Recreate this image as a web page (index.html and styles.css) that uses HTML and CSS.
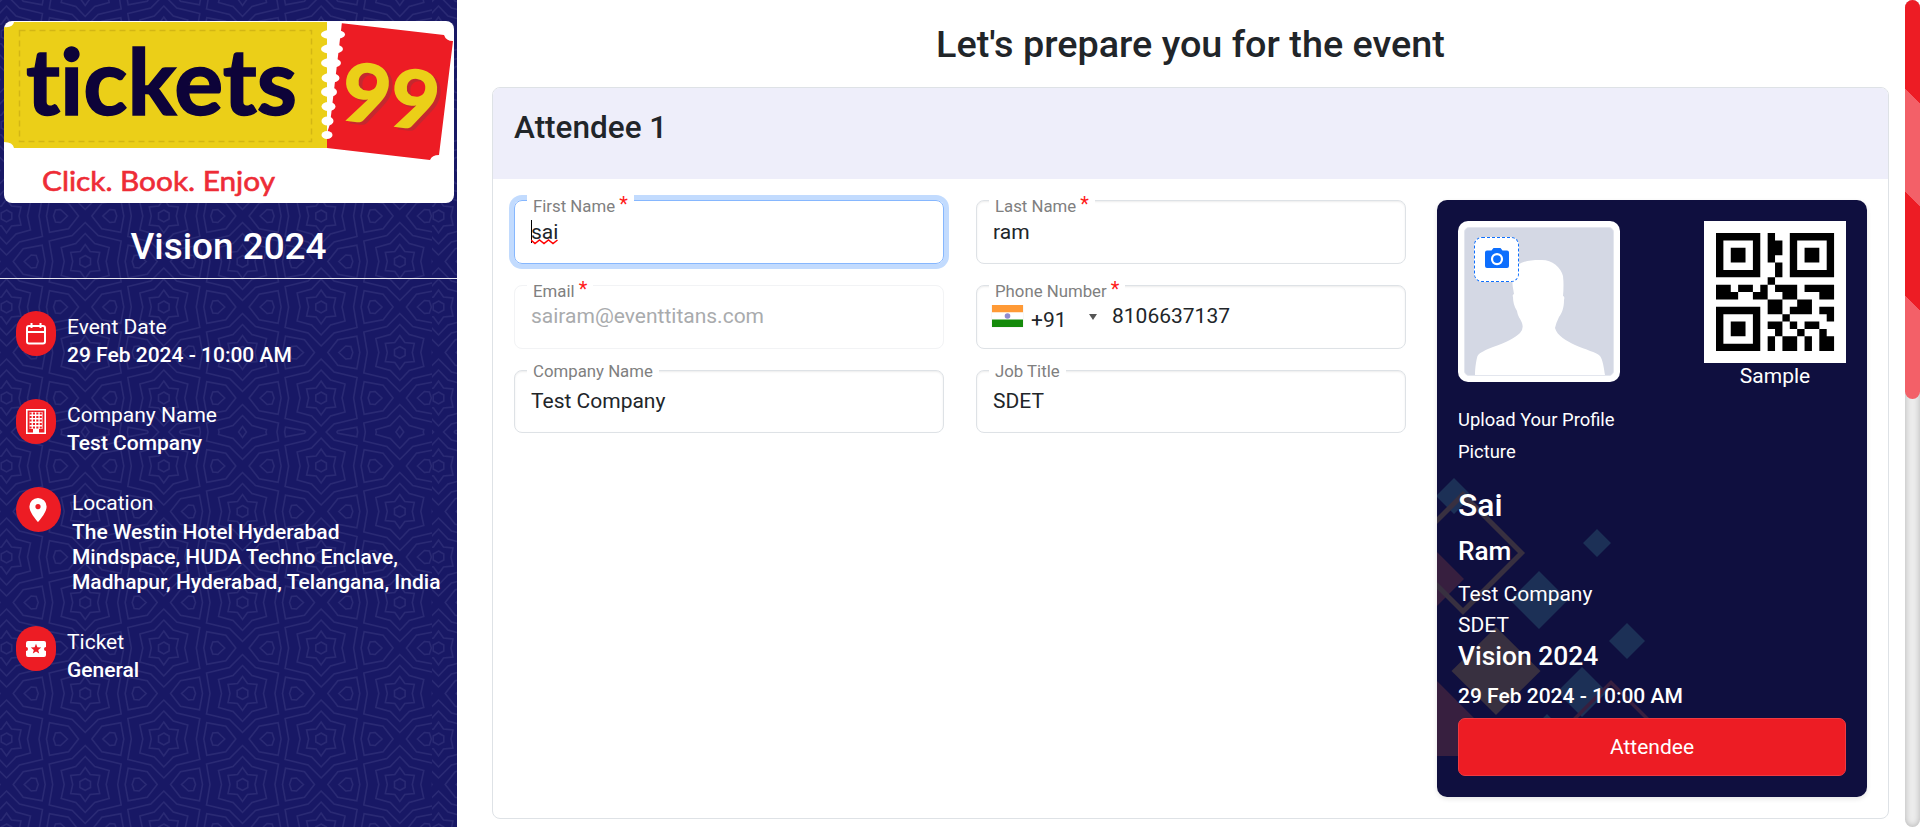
FILE: index.html
```html
<!DOCTYPE html>
<html lang="en">
<head>
<meta charset="utf-8">
<title>Vision 2024</title>
<link rel="stylesheet" href="styles.css">
</head>
<body>
<div class="page">
  <aside class="sidebar">
    <svg class="sidebar-pattern" width="457" height="827" aria-hidden="true">
      <defs>
        <g id="star" fill="none" stroke="#2a2a74" stroke-width="1.5">
          <path d="M0-6 5.3-3V3L0 6-5.3 3V-3Z"/>
          <path d="M0-17 5-10 14.5-9 12.5 0 14.5 9 5 10 0 17-5 10-14.5 9-12.5 0-14.5-9-5-10Z"/>
          <path d="M0-28 9.5-18 24-14 21 0 24 14 9.5 18 0 28-9.5 18-24 14-21 0-24-14-9.5-18Z"/>
          <path d="M0-39 13-26 36-20.5 32.5 0 36 20.5 13 26 0 39-13 26-36 20.5-32.5 0-36-20.5-13-26Z"/>
          <path d="M72 0 62-12.7 43-16.3 40 0 43 16.3 62 12.7ZM61 0 54-6.5 49-6 47 0 49 6 54 6.5Z"/>
          <path d="M-72 0-62-12.7-43-16.3-40 0-43 16.3-62 12.7ZM-61 0-54-6.5-49-6-47 0-49 6-54 6.5Z"/>
        </g>
        <g id="column">
          <use href="#star" y="-57"/><use href="#star" y="34"/><use href="#star" y="125"/><use href="#star" y="216"/><use href="#star" y="307"/><use href="#star" y="398"/><use href="#star" y="489"/>
        </g>
        <pattern id="tile" width="432" height="432" patternUnits="userSpaceOnUse">
          <use href="#column" x="6.5"/><use href="#column" x="163.8"/><use href="#column" x="321.1"/><use href="#column" x="478.4"/>
          <use href="#column" x="-72" y="45.5"/><use href="#column" x="85.2" y="45.5"/><use href="#column" x="242.5" y="45.5"/><use href="#column" x="399.8" y="45.5"/>
        </pattern>
      </defs>
      <rect width="457" height="827" fill="url(#tile)"/>
    </svg>
    <div class="sidebar-body">
      <svg class="logo" width="450" height="182" viewBox="0 0 450 182" role="img" aria-label="tickets 99">
        <path fill="#ebcf18" d="M10 1H323V127H10Q9 121 0 121V6Q9 7 10 1Z"/>
        <rect x="15.500" y="9.500" width="292" height="111" fill="none" stroke="#d3b615" stroke-width="1.500" stroke-dasharray="6 4"/>
        <path fill="#ed1c24" d="M336 2 440 14Q442 20 449 20L435 134Q428 134 426 139L323 127V112Z"/>
        <path fill="#fff" d="M323 1H338L326 103 323 112Z"/>
        <g fill="#fff"><ellipse cx="329" cy="13.500" rx="12" ry="5"/><ellipse cx="328" cy="28" rx="11" ry="5"/><ellipse cx="327" cy="42" rx="10" ry="5"/><ellipse cx="326.500" cy="57" rx="9" ry="5"/><ellipse cx="325" cy="71" rx="8" ry="5"/><ellipse cx="324.500" cy="85.500" rx="7" ry="4.500"/><ellipse cx="323.500" cy="100" rx="6" ry="4.500"/><ellipse cx="323" cy="114" rx="5.500" ry="4"/></g>
        <text class="logo-word" x="22" y="93.500" textLength="271" lengthAdjust="spacingAndGlyphs">tickets</text>
        <g transform="translate(335 98) rotate(7)">
          <text class="logo-num logo-num-shadow" x="4" y="2" textLength="97" lengthAdjust="spacingAndGlyphs">99</text>
          <text class="logo-num" x="0" y="0" textLength="97" lengthAdjust="spacingAndGlyphs">99</text>
        </g>
        <text class="logo-tag" x="38" y="169.500" textLength="233" lengthAdjust="spacingAndGlyphs">Click. Book. Enjoy</text>
      </svg>
      <h2 class="event-name">Vision 2024</h2>
      <div class="info-list">
        <div class="info">
          <span class="info-icon"><svg width="22" height="24" viewBox="0 0 22 24" fill="none" stroke="#fff" stroke-width="2"><rect x="2" y="4" width="18" height="17.500" rx="2"/><path d="M2 10H20M6.500 1V6M15.500 1V6"/></svg></span>
          <div><div class="info-label">Event Date</div><div class="info-value">29 Feb 2024 - 10:00 AM</div></div>
        </div>
        <div class="info">
          <span class="info-icon"><svg width="20" height="25" viewBox="0 0 20 25"><path fill="none" stroke="#fff" stroke-width="1.600" d="M.8.8H19.200V24.200H.8Z"/><path fill="#fff" d="M3.500 3H16.500V20H13V24H7V20H3.500Z"/><path stroke="#ed1c24" stroke-width="2" stroke-dasharray="2.100 1.300" d="M3.500 4.500H16.500M3.500 8H16.500M3.500 11.500H16.500M3.500 15H16.500M3.500 18.500H16.500"/></svg></span>
          <div><div class="info-label">Company Name</div><div class="info-value">Test Company</div></div>
        </div>
        <div class="info">
          <span class="info-icon info-icon-round"><svg width="18" height="24" viewBox="0 0 18 24"><path fill="#fff" fill-rule="evenodd" d="M9 0A8.600 8.600 0 0 0 .4 8.600C.4 15 9 24 9 24S17.600 15 17.600 8.600A8.600 8.600 0 0 0 9 0ZM9 6A2.600 2.600 0 1 1 9 11.200 2.600 2.600 0 0 1 9 6Z"/></svg></span>
          <div><div class="info-label">Location</div><div class="info-value info-address">The Westin Hotel Hyderabad Mindspace, HUDA Techno Enclave, Madhapur, Hyderabad, Telangana, India</div></div>
        </div>
        <div class="info info-last">
          <span class="info-icon"><svg width="20" height="16" viewBox="0 0 20 16"><path fill="#fff" d="M2 0H18A2 2 0 0 1 20 2V6A2 2 0 0 0 20 10V14A2 2 0 0 1 18 16H2A2 2 0 0 1 0 14V10A2 2 0 0 0 0 6V2A2 2 0 0 1 2 0Z"/><path fill="#ed1c24" d="M10 2.700 11.400 6.300 15.200 6.500 12.200 8.900 13.200 12.600 10 10.500 6.800 12.600 7.800 8.900 4.800 6.500 8.600 6.300Z"/></svg></span>
          <div><div class="info-label">Ticket</div><div class="info-value">General</div></div>
        </div>
      </div>
    </div>
  </aside>

  <main class="main">
    <h1 class="title">Let's prepare you for the event</h1>
    <section class="panel">
      <header class="panel-head">Attendee 1</header>
      <div class="panel-body">
        <div class="form">
          <div class="field field-focus"><label class="label">First Name <b>*</b></label><div class="value"><span class="misspelt">sai<svg class="squiggle" width="28" height="6" viewBox="0 0 28 6"><path d="M0 1 4 4.500 8.500 1 13 4.500 17.500 1 22 4.500 26.500 1" fill="none" stroke="#f00" stroke-width="1.500"/></svg></span></div></div>
          <div class="field"><label class="label">Last Name <b>*</b></label><div class="value">ram</div></div>
          <div class="field field-mid field-disabled"><label class="label">Email <b>*</b></label><div class="value">sairam@eventtitans.com</div></div>
          <div class="field field-mid"><label class="label">Phone Number <b>*</b></label>
            <div class="value phone">
              <svg class="flag" width="31" height="22" viewBox="0 0 31 22"><path fill="#ff9a36" d="M0 0H31V7.500H0Z"/><path fill="#fff" d="M0 7.500H31V14.500H0Z"/><path fill="#158a0b" d="M0 14.500H31V22H0Z"/><circle cx="15.500" cy="11" r="2.800" fill="#8f8bd0"/></svg>
              <span class="dial">+91</span><span class="caret"></span><span>8106637137</span>
            </div>
          </div>
          <div class="field field-low"><label class="label">Company Name</label><div class="value">Test Company</div></div>
          <div class="field field-low"><label class="label">Job Title</label><div class="value">SDET</div></div>
        </div>

        <aside class="badge">
          <svg class="badge-art" width="430" height="597" aria-hidden="true">
            <g fill="#1c3056"><path d="M17 278 35 296 17 314-1 296ZM160 329 174 343 160 357 146 343ZM102 371 131 400 102 429 73 400ZM190 423 208 441 190 459 172 441ZM145 467 170 492 145 517 120 492ZM110 514 120 524H100Z"/></g>
            <path fill="#371f3f" d="M0 352 27 379 0 406ZM0 481 75 556H0Z"/>
            <path fill="#383040" d="M59 427 103.500 471 59 515 14.500 471Z"/>
            <path fill="none" stroke="#383040" stroke-width="5" d="M26 294.500 84.500 353 26 411.500-32.500 353Z"/>
            <path fill="none" stroke="#371f3f" stroke-width="3.500" d="M134 522.500 174 482.500 214 522.500"/>
          </svg>
          <div class="badge-body">
            <div class="badge-top">
              <div class="photo">
                <svg width="162" height="161" viewBox="0 0 162 161" aria-hidden="true"><rect width="162" height="161" rx="10" fill="#fff"/><rect x="6.500" y="6.500" width="149" height="148" rx="4.500" fill="#d4d8e4" stroke="#e3e6ee"/><path fill="#fff" d="M17 154C17 148 18 140 19.500 135 22 131 28 129 35 126 49 121 57 117 62 112Q66 108 64 102C62 97 60 96 59 90 56 85 55 81 55 76Q54 74 56 73 53 58 55 50C59 42 67 39 82 39 93 38 103 46 105 55Q106 64 105 75 107 75 106 79C106 87 104 92 101 96Q98 102 97 107C99 115 109 120 117 124 128 129 138 131 142 135 145 139 146 148 147 154Z"/></svg>
                <span class="camera"><svg width="24" height="20" viewBox="0 0 24 20"><path fill="#0d6efd" fill-rule="evenodd" d="M8.500 0H15.500L17.500 2.400H22A2 2 0 0 1 24 4.400V18A2 2 0 0 1 22 20H2A2 2 0 0 1 0 18V4.400A2 2 0 0 1 2 2.400H6.500ZM12 5A6.100 6.100 0 1 0 12 17.200 6.100 6.100 0 0 0 12 5Z"/><circle cx="12" cy="11.100" r="3.900" fill="#0d6efd"/></svg></span>
              </div>
              <div class="qr">
                <svg width="142" height="142" viewBox="0 0 142 142" role="img" aria-label="QR code"><rect width="142" height="142" fill="#fff"/><path transform="translate(12 12) scale(7.380)" d="M0 0h6v6H0ZM1 1v4h4V1ZM2 2h2v2H2ZM10 0h6v6h-6ZM11 1v4h4V1ZM12 2h2v2h-2ZM0 10h6v6H0ZM1 11v4h4v-4ZM2 12h2v2H2ZM7 0h1v1h1v2H8v1H7ZM8 4h1v2H8ZM7 6h1v1H7ZM0 7h2v1h1v1H0ZM3 7h2v1H3ZM6 7h1v2H5V8h1ZM8 7h3v2H9V8H8ZM12 7h4v2h-2V8h-2ZM7 9h2v2H7ZM11 9h2v2h-3v-1h1ZM14 10h2v2h-1v-1h-1ZM9 11h1v1H9ZM7 12h2v2H8v-1H7ZM10 12h1v1h-1ZM12 12h2v1h-2ZM11 13h1v1h-1ZM14 13h1v1h1v2h-2ZM7 14h1v2H7ZM9 14h2v2H9ZM12 14h1v2h-1Z" fill-rule="evenodd"/></svg>
                <span>Sample</span>
              </div>
            </div>
            <p class="upload">Upload Your Profile Picture</p>
            <div class="first">Sai</div>
            <div class="last">Ram</div>
            <div class="org">Test Company</div>
            <div class="role">SDET</div>
            <div class="badge-event">Vision 2024</div>
            <div class="badge-date">29 Feb 2024 - 10:00 AM</div>
            <div class="badge-type">Attendee</div>
          </div>
        </aside>
      </div>
    </section>
  </main>
  <div class="scroll"><div class="thumb"></div></div>
</div>
</body>
</html>
```
FILE: styles.css
```css
* { box-sizing: border-box; }
body {
  margin: 0;
  font: 400 21px/30px Roboto, "Liberation Sans", sans-serif;
  color: #212529;
  background: #fff;
  overflow: hidden;
}
.page { display: flex; height: 827px; }

.sidebar { position: relative; width: 457px; background: #181865; color: #fff; flex: none; }
.sidebar-pattern { position: absolute; inset: 0; }
.sidebar-body { position: relative; padding-top: 21px; }
.logo { display: block; margin-left: 4px; background: #fff; border-radius: 8px; }
.logo-word {
  font: 700 92px Lato, sans-serif; font-variant-ligatures: none;
  fill: #0d0339; stroke: #0d0339; stroke-width: 1.500px;
}
.logo-num { font: 700 80px Lato, sans-serif; fill: #ebcf18; stroke: #ebcf18; stroke-width: 2px; }
.logo-num-shadow { fill: #c5282f; stroke: #c5282f; }
.logo-tag { font: 400 27px Lato, sans-serif; fill: #ee2c36; stroke: #ee2c36; stroke-width: .6px; }
.event-name {
  margin: 0; height: 76px; padding-top: 21px;
  font-size: 36.900px; font-weight: 500; line-height: 45px; text-align: center;
  border-bottom: 1px solid #e8e8f0;
}
.info-list { display: flex; flex-direction: column; gap: 30px; padding: 32px 0 0 16px; }
.info { display: flex; gap: 11px; min-height: 58px; }
.info-icon {
  width: 40px; height: 45px; border-radius: 20px; background: #ed1c24; flex: none;
  display: flex; align-items: center; justify-content: center;
}
.info-icon-round { width: 45px; border-radius: 50%; }
.info-icon-round svg { margin-right: 1px; }
.info-label { line-height: 32px; }
.info-value { font-weight: 500; line-height: 24px; }
.info-address { line-height: 25px; width: 376px; padding-top: 1px; }
.info-last { margin-top: 1px; }

.main { flex: 1; padding: 0 16px 0 35px; }
.title {
  margin: 0; height: 87px; padding-top: 22px;
  font-size: 37.800px; font-weight: 500; line-height: 45px; text-align: center;
}
.panel { border: 1px solid #dee2e6; border-radius: 8px; height: 732px; }
.panel-head {
  height: 91px; padding: 20px 21px; background: #eeeefa; border-radius: 7px 7px 0 0;
  font-size: 31.500px; font-weight: 500; line-height: 40px;
}
.panel-body { display: flex; gap: 31px; padding: 21px; align-items: flex-start; }
.form { display: grid; grid-template-columns: 430px 430px; column-gap: 32px; row-gap: 21px; }
.field {
  position: relative; height: 64px; border: 1px solid #dee2e6; border-radius: 8px;
  padding: 16px 16px 0; box-shadow: inset 0 1px 2px rgba(0, 0, 0, .075);
}
.field-mid { padding-top: 15px; }
.field-low { height: 63px; padding-top: 15px; }
.field-focus { border-color: #86b7fe; box-shadow: 0 0 0 5px #c2dbfe; }
.field-disabled { border-color: #f2f3f5; box-shadow: none; }
.field-disabled .value { color: #a9abad; }
.label {
  position: absolute; left: 12px; top: -9px; padding: 0 6px; background: #fff;
  font-size: 16.800px; line-height: 28px; color: #808080;
}
.field-low .label { top: -14px; }
.label b { font-size: 20px; font-weight: 400; color: #ff1a1a; line-height: 20px; vertical-align: 1px; }
.value { line-height: 30px; white-space: nowrap; }
.misspelt { position: relative; }
.misspelt::before { content: ""; position: absolute; left: 0; top: 0; width: 1px; height: 23px; background: #000; }
.squiggle { position: absolute; left: 0; top: 19px; }
.phone { display: flex; }
.flag { margin: 4px 8px 0 -1px; flex: none; box-shadow: 0 0 1px #ccc; }
.dial { width: 58px; padding-top: 4px; }
.caret {
  width: 8px; height: 6px; margin: 13px 15px 0 0; background: #555;
  clip-path: polygon(0 0, 100% 0, 50% 100%);
}

.badge {
  position: relative; width: 430px; height: 597px; border-radius: 10px; overflow: hidden;
  background: #0f0f3f; color: #fff; box-shadow: 0 2px 5px rgba(0, 0, 0, .1); flex: none;
}
.badge-art { position: absolute; inset: 0; }
.badge-body { position: relative; padding: 21px; }
.badge-top { display: flex; justify-content: space-between; height: 183px; }
.photo { position: relative; }
.camera {
  position: absolute; left: 16px; top: 16px; width: 45px; height: 45px; border-radius: 8px;
  border: 1px dashed #0d6efd; background: #fff; padding-bottom: 3px;
  display: flex; align-items: center; justify-content: center;
}
.qr { display: flex; flex-direction: column; align-items: center; line-height: 27px; }
.upload { margin: 0; width: 170px; font-size: 18.400px; line-height: 32px; }
.first { margin-top: 17px; font-size: 31.800px; font-weight: 500; line-height: 40px; }
.last { margin-top: 9px; font-size: 26.200px; font-weight: 500; line-height: 34px; }
.org { margin-top: 11px; line-height: 31px; }
.role { line-height: 31px; }
.badge-event { margin-top: -1px; font-size: 26.400px; font-weight: 500; line-height: 32px; }
.badge-date { margin-top: 9px; font-weight: 500; line-height: 30px; }
.badge-type {
  margin-top: 7px; height: 58px; border-radius: 7px; background: #ed1c24; border: 1px solid #ef3a41;
  line-height: 56px; text-align: center;
}

.scroll {
  width: 15px; border-radius: 8px; flex: none;
  background: #ececec; box-shadow: inset 0 0 6px rgba(0, 0, 0, .25);
}
.thumb {
  height: 399px; border-radius: 8px;
  background: repeating-linear-gradient(45deg, #f36068 0 73.250px, #ed1c24 73.250px 146.500px);
}
```
